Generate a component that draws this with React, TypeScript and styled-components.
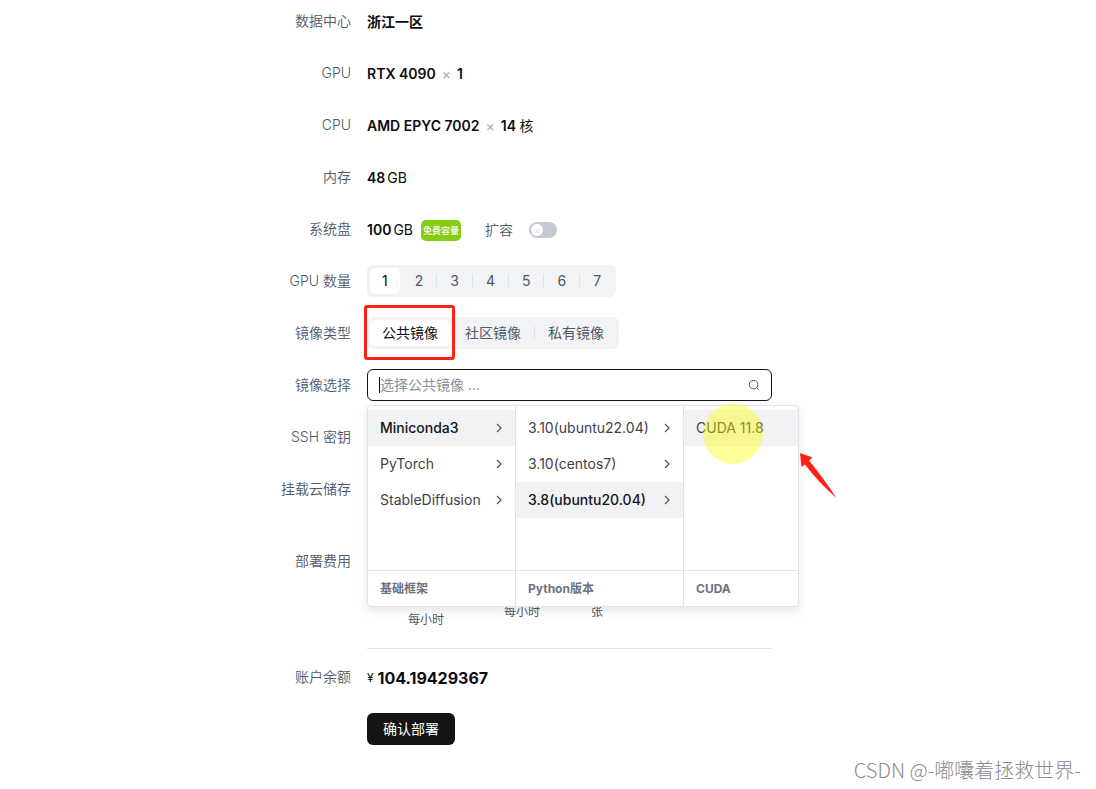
import React, { useState } from "react";
import styled, { createGlobalStyle } from "styled-components";

const GlobalStyle = createGlobalStyle`
  * { box-sizing: border-box; }
  body {
    margin: 0;
    background: #fff;
    color: #0b0c10;
    font-family: Inter, "Noto Sans CJK SC", sans-serif;
    font-size: 14px;
    line-height: 20px;
  }
  button, input { font: inherit; color: inherit; }
`;

const Page = styled.main`
  position: relative;
  min-height: 100vh;
  padding: 5px 16px 44px;
`;

const Form = styled.form`
  display: flex;
  flex-direction: column;
  gap: 20px;
  max-width: 616px;
  margin: 0 auto;
`;

const Row = styled.div<{ $height?: number }>`
  display: grid;
  grid-template-columns: 111px minmax(0, 405px);
  column-gap: 16px;
  align-items: start;
  min-height: ${(p) => p.$height ?? 32}px;
`;

const Label = styled.label`
  line-height: 32px;
  text-align: right;
  font-weight: 350;
  color: #4e5969;
`;

const Value = styled.div`
  display: flex;
  align-items: center;
  height: 32px;
  padding-top: 2px;
`;

const Strong = styled.span`
  font-weight: 600;
  white-space: pre;
`;

const Unit = styled.span`
  margin-left: 2px;
`;

const Times = styled.span`
  margin: 0 6px;
  font-size: 14px;
  color: #a3a8b3;
`;

const Tag = styled.span`
  margin-left: 8px;
  padding: 0 2px;
  border-radius: 5px;
  background: #84cc16;
  color: #fff;
  font-size: 9px;
  font-weight: 500;
  line-height: 21px;
`;

const SwitchLabel = styled.label`
  display: flex;
  align-items: center;
  gap: 16px;
  margin-left: 24px;
  font-weight: 350;
  color: #4e5969;
`;

const Switch = styled.input`
  appearance: none;
  width: 28px;
  height: 16px;
  margin: 0;
  border-radius: 8px;
  background: #c5c9d1;
  &::before {
    content: "×";
    display: block;
    width: 12px;
    height: 12px;
    margin: 2px;
    border-radius: 50%;
    background: #fff;
    color: #dfe2e6;
    font-size: 10px;
    line-height: 12px;
    text-align: center;
  }
  &:checked { background: #141414; }
  &:checked::before { margin-left: 14px; }
`;

const Segments = styled.div`
  display: inline-flex;
  justify-self: start;
  gap: 3px;
  height: 32px;
  padding: 3px;
  border-radius: 6px;
  background: #f1f3f5;
`;

const Segment = styled.label<{ $active: boolean; $divided: boolean }>`
  position: relative;
  padding: 0 12px;
  border-radius: 5px;
  line-height: 26px;
  white-space: nowrap;
  background: ${(p) => (p.$active ? "#fff" : "transparent")};
  color: ${(p) => (p.$active ? "#0b0c10" : "#4e5969")};
  input {
    position: absolute;
    opacity: 0;
    pointer-events: none;
  }
  &::before {
    content: "";
    display: ${(p) => (p.$divided ? "block" : "none")};
    position: absolute;
    left: -2px;
    top: 6px;
    width: 1px;
    height: 14px;
    background: #dfe2e7;
  }
`;

const Highlight = styled.span`
  position: absolute;
  inset: -15px -5px -14px -6px;
  z-index: 1;
  border: 3px solid #ff2116;
  border-radius: 3px;
  pointer-events: none;
`;

const Picker = styled.div`
  position: relative;
`;

const SearchBox = styled.div`
  display: flex;
  align-items: center;
  height: 32px;
  padding: 0 11px;
  border: 1px solid #141414;
  border-radius: 6px;
  &::before {
    content: "";
    width: 1px;
    height: 16px;
    background: #0b0c10;
  }
`;

const SearchInput = styled.input`
  flex: 1;
  min-width: 0;
  padding: 0;
  border: 0;
  outline: 0;
  background: transparent;
  &::placeholder { color: #86909c; opacity: 1; }
`;

const Menu = styled.div`
  position: absolute;
  top: 36px;
  left: 0;
  z-index: 2;
  display: grid;
  grid-template-columns: 148px 168px 114px;
  border: 1px solid #e2e3e9;
  border-radius: 4px;
  background: #fff;
  box-shadow: 0 4px 10px rgba(0, 0, 0, 0.1);
`;

const Column = styled.div`
  display: flex;
  flex-direction: column;
  &:not(:last-of-type) { border-right: 1px solid #e2e3e9; }
`;

const Options = styled.div`
  height: 164px;
  padding-top: 4px;
`;

const Option = styled.button<{ $active?: boolean; $lit?: boolean }>`
  position: relative;
  display: flex;
  align-items: center;
  justify-content: space-between;
  width: 100%;
  height: 36px;
  padding: 0 11px 0 12px;
  border: 0;
  background: ${(p) => (p.$active || p.$lit ? "#f1f2f4" : "transparent")};
  color: ${(p) => (p.$active ? "#141419" : "#3f4248")};
  font-weight: ${(p) => (p.$active ? 500 : 400)};
  white-space: nowrap;
`;

const ColumnTitle = styled.div`
  height: 36px;
  padding: 0 12px;
  border-top: 1px solid #e2e3e9;
  color: #6d7282;
  font-size: 12px;
  font-weight: 700;
  line-height: 35px;
`;

const Spotlight = styled.span`
  position: absolute;
  left: 19px;
  top: -6px;
  width: 60px;
  height: 60px;
  border-radius: 50%;
  background: rgba(255, 255, 0, 0.4);
  pointer-events: none;
`;

const Pointer = styled.svg`
  position: absolute;
  left: 100%;
  top: 46px;
  pointer-events: none;
`;

const Fees = styled.div`
  display: grid;
  grid-template-columns: 118px 74px 76px;
  align-items: end;
  min-height: 83px;
`;

const FeeUnit = styled.span<{ $raised?: boolean }>`
  padding-bottom: ${(p) => (p.$raised ? 8 : 0)}px;
  font-size: 12px;
  line-height: 16px;
  text-align: center;
  color: #4e5969;
`;

const Footer = styled.div`
  display: flex;
  flex-direction: column;
  gap: 20px;
`;

const Divider = styled.hr`
  width: 405px;
  max-width: calc(100% - 127px);
  height: 1px;
  margin: 0 0 -8px 127px;
  border: 0;
  background: #e2e3e9;
`;

const Currency = styled.span`
  margin-right: 4px;
  font-size: 12px;
`;

const Amount = styled.span`
  font-size: 16px;
  font-weight: 700;
`;

const Submit = styled.button`
  height: 32px;
  margin-left: 127px;
  padding: 0 16px;
  align-self: flex-start;
  border: 0;
  border-radius: 6px;
  background: #141414;
  color: #fff;
`;

const Watermark = styled.div`
  position: absolute;
  right: 15px;
  bottom: 5px;
  color: #8c8c8c;
  font-family: "Noto Sans CJK SC", sans-serif;
  font-size: 20px;
  font-weight: 300;
  line-height: 28px;
`;

const Chevron = () => (
  <svg width="10" height="10" viewBox="0 0 10 10" fill="none" stroke="#4b5563" strokeWidth="1.2" aria-hidden="true">
    <path d="M3 1l4 4-4 4" />
  </svg>
);

const SearchIcon = () => (
  <svg width="12" height="12" viewBox="0 0 12 12" fill="none" stroke="#4b5563" strokeWidth="1" aria-hidden="true">
    <circle cx="5.6" cy="5.6" r="4.3" />
    <path d="M8.600 8.600L10.900 10.900" />
  </svg>
);

function SegmentGroup({ name, label, items, marked }: { name: string; label: string; items: string[]; marked?: boolean }) {
  const [active, setActive] = useState(0);
  return (
    <Segments role="radiogroup" aria-label={label}>
      {items.map((item, i) => (
        <Segment key={item} $active={i === active} $divided={i > 0 && i !== active && i - 1 !== active}>
          <input type="radio" name={name} checked={i === active} onChange={() => setActive(i)} />
          {item}
          {marked && i === 0 && <Highlight />}
        </Segment>
      ))}
    </Segments>
  );
}

const columns = [
  { title: "基础框架", options: ["Miniconda3", "PyTorch", "StableDiffusion"], active: 0 },
  { title: "Python版本", options: ["3.10(ubuntu22.04)", "3.10(centos7)", "3.8(ubuntu20.04)"], active: 2 },
];

export default function App() {
  return (
    <Page>
      <GlobalStyle />
      <Form onSubmit={(e) => e.preventDefault()}>
        <Row>
          <Label as="span">数据中心</Label>
          <Value><Strong>浙江一区</Strong></Value>
        </Row>
        <Row>
          <Label as="span">GPU</Label>
          <Value><Strong>RTX 4090</Strong><Times>×</Times><Strong>1</Strong></Value>
        </Row>
        <Row>
          <Label as="span">CPU</Label>
          <Value><Strong>AMD EPYC 7002</Strong><Times>×</Times><Strong>14 </Strong><span>核</span></Value>
        </Row>
        <Row>
          <Label as="span">内存</Label>
          <Value><Strong>48</Strong><Unit>GB</Unit></Value>
        </Row>
        <Row>
          <Label as="span">系统盘</Label>
          <Value>
            <Strong>100</Strong><Unit>GB</Unit>
            <Tag>免费容量</Tag>
            <SwitchLabel>扩容<Switch type="checkbox" role="switch" /></SwitchLabel>
          </Value>
        </Row>
        <Row>
          <Label as="span">GPU 数量</Label>
          <SegmentGroup name="gpu" label="GPU 数量" items={["1", "2", "3", "4", "5", "6", "7"]} />
        </Row>
        <Row>
          <Label as="span">镜像类型</Label>
          <SegmentGroup name="image-type" label="镜像类型" items={["公共镜像", "社区镜像", "私有镜像"]} marked />
        </Row>
        <Row>
          <Label htmlFor="image">镜像选择</Label>
          <Picker>
            <SearchBox>
              <SearchInput id="image" placeholder="选择公共镜像 ..." />
              <SearchIcon />
            </SearchBox>
            <Menu>
              {columns.map((column) => (
                <Column key={column.title}>
                  <Options>
                    {column.options.map((option, i) => (
                      <Option key={option} type="button" $active={i === column.active}>
                        {option}
                        <Chevron />
                      </Option>
                    ))}
                  </Options>
                  <ColumnTitle>{column.title}</ColumnTitle>
                </Column>
              ))}
              <Column>
                <Options>
                  <Option type="button" $lit>CUDA 11.8<Spotlight /></Option>
                </Options>
                <ColumnTitle>CUDA</ColumnTitle>
              </Column>
              <Pointer width="40" height="48" viewBox="0 0 40 48" aria-hidden="true">
                <path d="M2 1L14.500 5.500L11 8.500Q24 24 38.500 46Q20 30 7 12.500L3.500 15Z" fill="#ff2116" />
              </Pointer>
            </Menu>
          </Picker>
        </Row>
        <Row><Label as="span">SSH 密钥</Label></Row>
        <Row $height={52}><Label as="span">挂载云储存</Label></Row>
        <Row>
          <Label as="span">部署费用</Label>
          <Fees>
            <FeeUnit>每小时</FeeUnit>
            <FeeUnit $raised>每小时</FeeUnit>
            <FeeUnit $raised>张</FeeUnit>
          </Fees>
        </Row>
        <Footer>
          <Divider />
          <Row>
            <Label as="span">账户余额</Label>
            <Value><Currency>¥</Currency><Amount>104.19429367</Amount></Value>
          </Row>
          <Submit type="submit">确认部署</Submit>
        </Footer>
      </Form>
      <Watermark>CSDN @-嘟囔着拯救世界-</Watermark>
    </Page>
  );
}
